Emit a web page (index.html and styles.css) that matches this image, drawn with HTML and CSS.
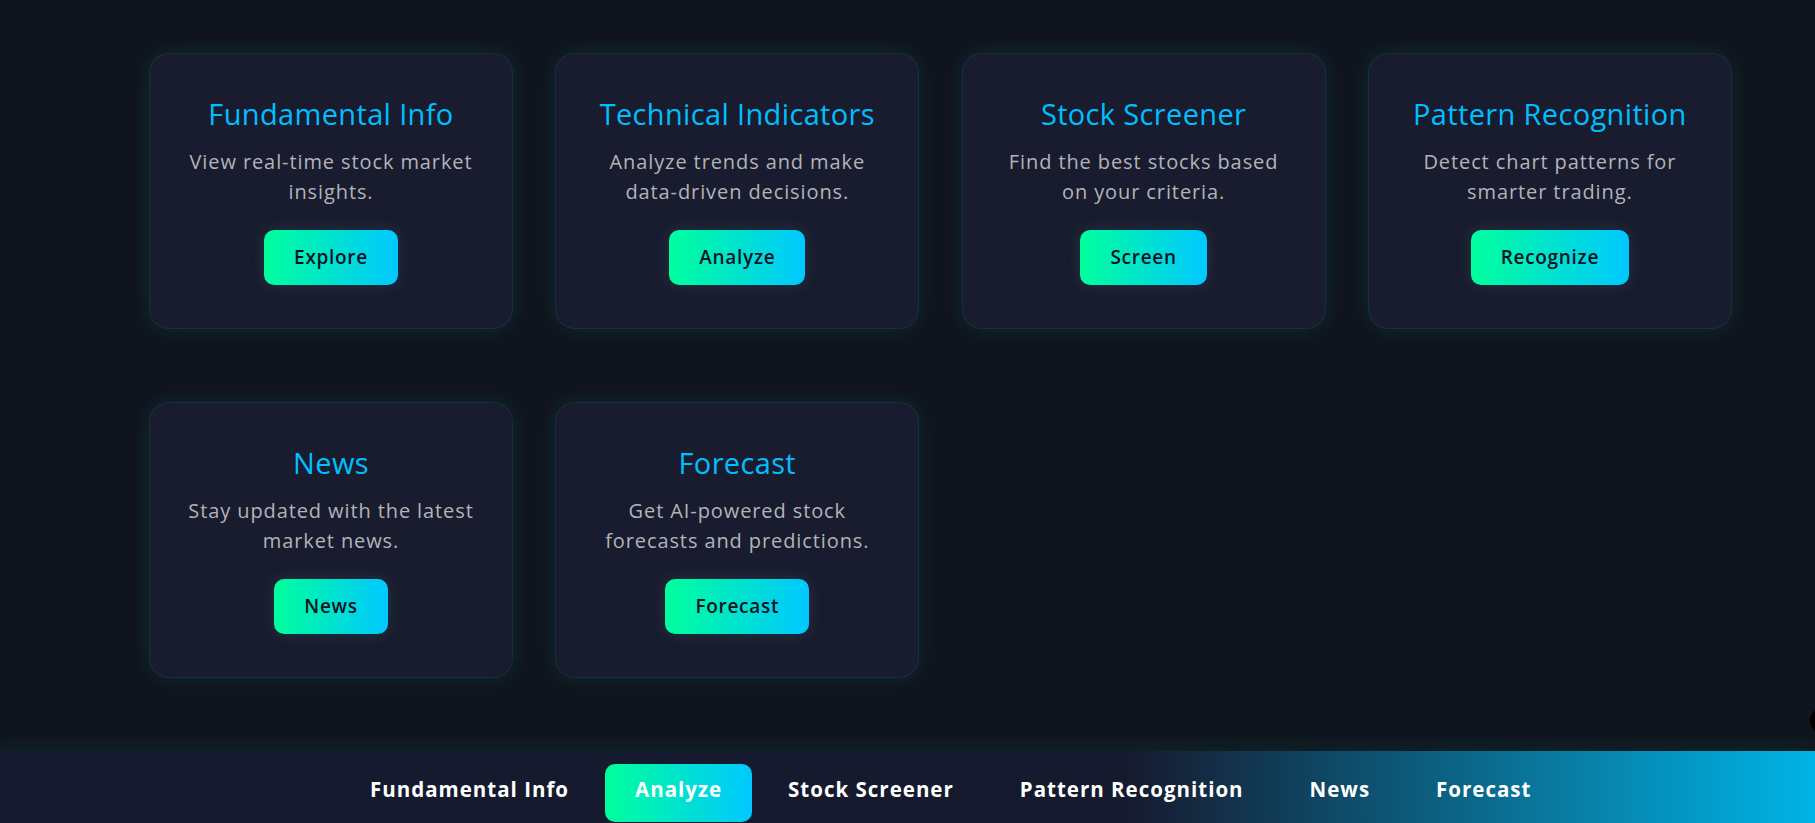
FILE: index.html
```html
<!DOCTYPE html>
<html lang="en">
<head>
<meta charset="utf-8">
<title>Stock Dashboard</title>
<link rel="stylesheet" href="styles.css">
</head>
<body>
<main class="page">
  <section class="cards">
    <div class="card">
      <h2 class="card-title">Fundamental Info</h2>
      <p class="card-text">View real-time stock market insights.</p>
      <a class="card-btn" href="#">Explore</a>
    </div>
    <div class="card">
      <h2 class="card-title">Technical Indicators</h2>
      <p class="card-text">Analyze trends and make data-driven decisions.</p>
      <a class="card-btn" href="#">Analyze</a>
    </div>
    <div class="card">
      <h2 class="card-title">Stock Screener</h2>
      <p class="card-text">Find the best stocks based on your criteria.</p>
      <a class="card-btn" href="#">Screen</a>
    </div>
    <div class="card">
      <h2 class="card-title">Pattern Recognition</h2>
      <p class="card-text">Detect chart patterns for smarter trading.</p>
      <a class="card-btn" href="#">Recognize</a>
    </div>
    <div class="card">
      <h2 class="card-title">News</h2>
      <p class="card-text">Stay updated with the latest market news.</p>
      <a class="card-btn" href="#">News</a>
    </div>
    <div class="card">
      <h2 class="card-title">Forecast</h2>
      <p class="card-text">Get AI-powered stock forecasts and predictions.</p>
      <a class="card-btn" href="#">Forecast</a>
    </div>
  </section>
</main>
<nav class="bottom-nav">
  <a class="nav-link" href="#">Fundamental Info</a>
  <a class="nav-link active" href="#">Analyze</a>
  <a class="nav-link" href="#">Stock Screener</a>
  <a class="nav-link" href="#">Pattern Recognition</a>
  <a class="nav-link" href="#">News</a>
  <a class="nav-link" href="#">Forecast</a>
</nav>
<div class="fab"></div>
</body>
</html>
```
FILE: styles.css
```css
* { box-sizing: border-box; }
html, body {
  margin: 0;
  padding: 0;
  height: 100%;
}
body {
  background: #10141e;
  font-family: "Open Sans", "Inter", sans-serif;
  overflow: hidden;
  position: relative;
}
.page {
  padding: 53px 0 0 149px;
  height: 751px;
}
.cards {
  display: grid;
  grid-template-columns: repeat(4, 364px);
  column-gap: 42.3px;
  row-gap: 73px;
}
.card {
  height: 276px;
  background: #181c2e;
  border: 1px solid rgba(0, 190, 160, 0.12);
  border-radius: 20px;
  box-shadow: 0 0 22px rgba(0, 200, 150, 0.12);
  display: flex;
  flex-direction: column;
  align-items: center;
  text-align: center;
  padding: 43px 20px 0;
}
.card-title {
  margin: 0;
  font-weight: 400;
  font-size: 29px;
  line-height: 34px;
  color: #00bfff;
  letter-spacing: 0.35px;
  white-space: nowrap;
}
.card-text {
  margin: 16px 0 0;
  font-size: 20px;
  line-height: 30px;
  color: #b3b3b8;
  letter-spacing: 0.9px;
  max-width: 292px;
}
.card-btn {
  margin-top: 23px;
  display: inline-block;
  padding: 0 30px;
  height: 55px;
  line-height: 55px;
  border-radius: 10px;
  background: linear-gradient(90deg, #00ff9c, #00c8ff);
  color: #0e1424;
  font-weight: 600;
  font-size: 19px;
  letter-spacing: 0.7px;
  text-decoration: none;
  box-shadow: 0 0 14px rgba(120, 160, 170, 0.18);
}
.bottom-nav {
  position: absolute;
  left: 0;
  top: 751px;
  width: 100%;
  height: 90px;
  background: linear-gradient(90deg, #161a2e 0%, #161a2e 62%, #00b4e6 100%);
  box-shadow: 0 -6px 18px rgba(0, 160, 120, 0.12);
  display: flex;
  justify-content: flex-start;
  padding: 13px 0 0 340px;
  gap: 6px;
  align-items: flex-start;
}
.nav-link {
  display: block;
  padding: 11px 30px 19px;
  line-height: 28px;
  font-size: 20.5px;
  font-weight: 700;
  letter-spacing: 1px;
  color: #ffffff;
  text-decoration: none;
  border-radius: 10px;
}
.nav-link.active {
  background: linear-gradient(90deg, #00ff9c, #00c8ff);
}
.fab {
  position: absolute;
  left: 1810px;
  top: 708px;
  width: 26px;
  height: 26px;
  border-radius: 50%;
  background: #000;
}
```
